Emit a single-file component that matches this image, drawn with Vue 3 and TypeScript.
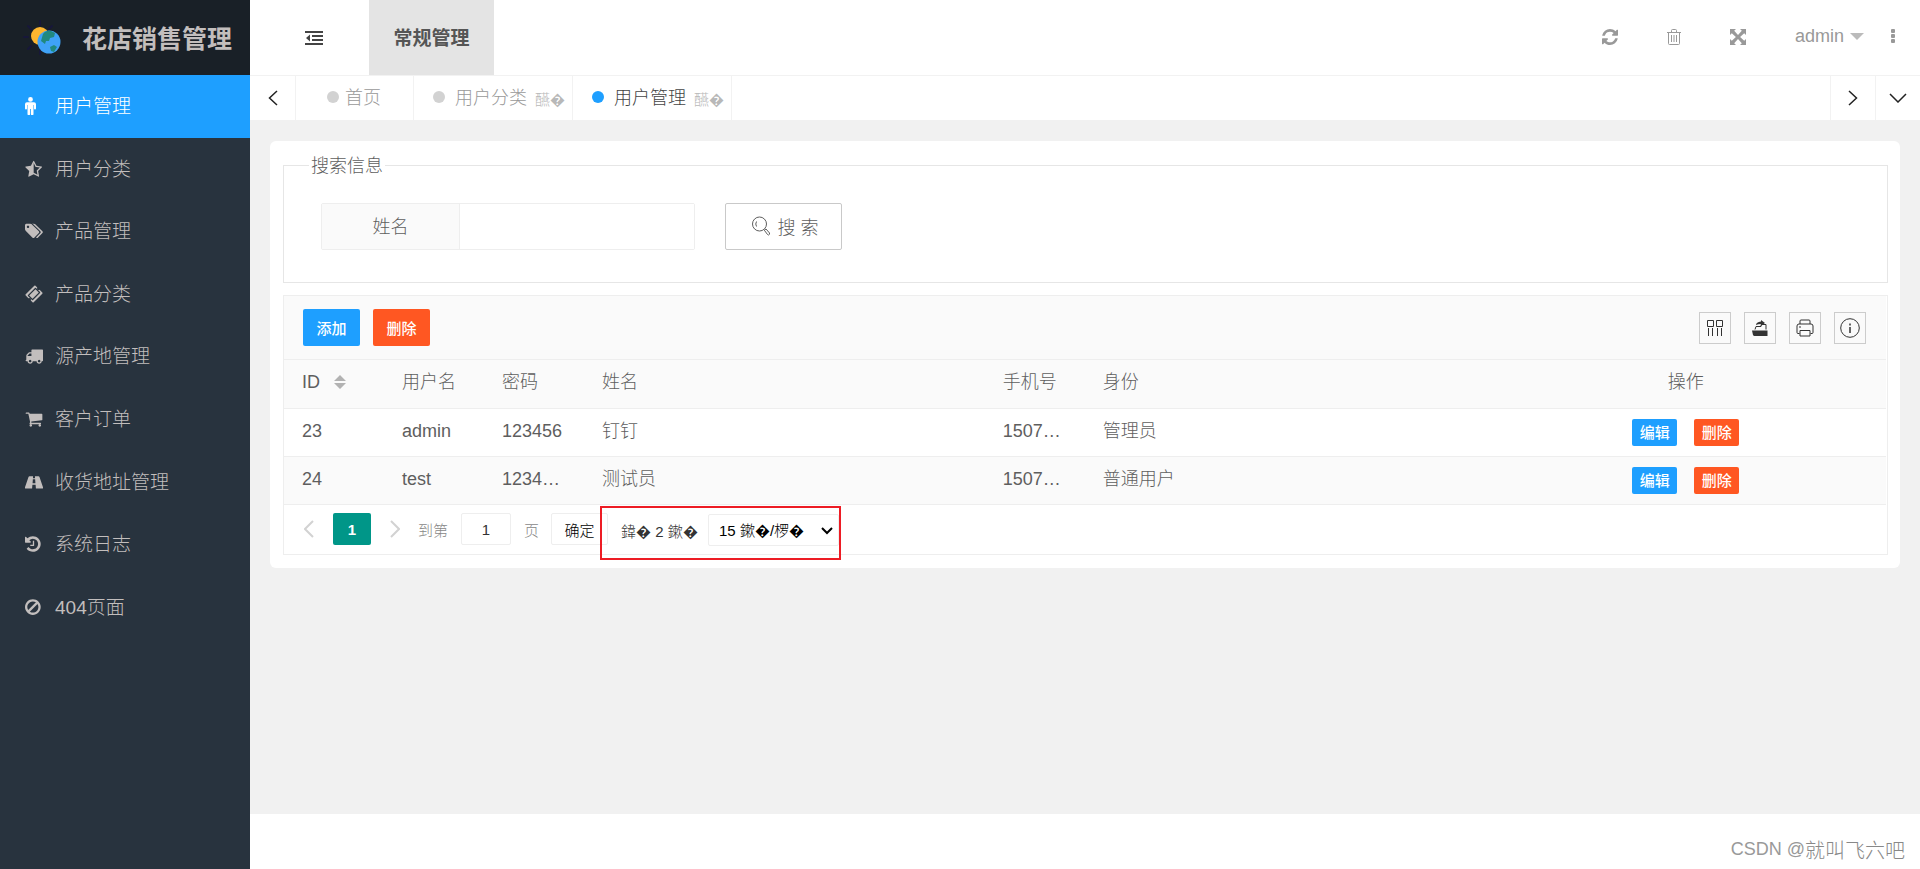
<script setup lang="ts">
import { ref } from 'vue'

interface MenuItem { label: string; icon: string; box: string; path: string }
interface User { id: number; name: string; password: string; realName: string; phone: string; role: string }
interface Tab { label: string; closable: boolean }

const menu: MenuItem[] = [
  { label: '用户管理', icon: 'male', box: '0 0 11 18', path: 'M5.5 0a2.4 2.4 0 1 1 0 4.8a2.4 2.4 0 0 1 0-4.8M2 5.3h7a2 2 0 0 1 2 2v4.2a1 1 0 0 1-2 0V8h-.5v9a1.2 1.2 0 0 1-2.6 0v-5h-.8v5a1.2 1.2 0 0 1-2.6 0V8H2v3.500a1 1 0 0 1-2 0V7.300a2 2 0 0 1 2-2' },
  { label: '用户分类', icon: 'star', box: '0 0 1728 1792', path: 'M1186 1001l257-250-356-52-66-10-30-60-159-322v963l59 31 318 168-60-355-12-66zm452-262l-363 354 86 500q5 33-6 51.500t-34 18.500q-17 0-40-12l-449-236-449 236q-23 12-40 12-23 0-34-18.500t-6-51.500l86-500-364-354q-32-32-23-59.500t54-34.500l502-73 225-455q20-41 49-41 28 0 49 41l225 455 502 73q45 7 54 34.500t-24 59.500z' },
  { label: '产品管理', icon: 'tags', box: '0 0 1920 1792', path: 'M448 448q0-53-37.500-90.500t-90.500-37.500-90.500 37.500-37.500 90.500 37.500 90.500 90.500 37.500 90.500-37.500 37.500-90.500zm1067 576q0 53-37 90l-491 492q-39 37-91 37-53 0-90-37l-715-716q-38-37-64.500-101t-26.500-117v-416q0-52 38-90t90-38h416q53 0 117 26.500t102 64.500l715 714q37 39 37 91zm384 0q0 53-37 90l-491 492q-39 37-91 37-36 0-59-14t-53-45l470-470q37-37 37-90 0-52-37-91l-715-714q-38-38-102-64.500t-117-26.500h224q53 0 117 26.500t102 64.500l715 714q37 39 37 91z' },
  { label: '产品分类', icon: 'ticket', box: '0 0 18 18', path: 'M10.500.700l1.700 1.700a1.800 1.800 0 0 0 2.400 2.400l2.700 2.700q.6.600 0 1.200l-8.600 8.600q-.6.600-1.200 0l-1.700-1.700a1.800 1.800 0 0 0-2.400-2.400L.7 10.500q-.6-.600 0-1.200L9.300.700q.6-.600 1.200 0M10 3L3 10q-.5.500 0 1l4 4q.5.500 1 0l7-7q.5-.5 0-1l-4-4q-.5-.5-1 0M10.500 4.200l3.300 3.300l-6.300 6.300L4.200 10.500z' },
  { label: '源产地管理', icon: 'truck', box: '0 0 1792 1792', path: 'M640 1408q0-52-38-90t-90-38-90 38-38 90 38 90 90 38 90-38 38-90zm-384-512h384v-256h-158q-13 0-22 9l-195 195q-9 9-9 22v30zm1280 512q0-52-38-90t-90-38-90 38-38 90 38 90 90 38 90-38 38-90zm256-1088v1024q0 15-4 26.500t-13.500 18.500-16.500 11.500-23.500 6-22.500 2-25.500 0-22.500-.5q0 106-75 181t-181 75-181-75-75-181h-384q0 106-75 181t-181 75-181-75-75-181h-64q-3 0-22.500.5t-25.500 0-22.500-2-23.500-6-16.500-11.500-13.500-18.500-4-26.500q0-26 19-45t45-19v-320q0-8-.5-35t0-38 2.500-34.500 6.500-37 14-30.500 22.500-30l198-198q19-19 50.500-32t58.500-13h160v-192q0-26 19-45t45-19h1024q26 0 45 19t19 45z' },
  { label: '客户订单', icon: 'cart', box: '0 0 1792 1792', path: 'M704 1536q0 52-38 90t-90 38-90-38-38-90 38-90 90-38 90 38 38 90zm896 0q0 52-38 90t-90 38-90-38-38-90 38-90 90-38 90 38 38 90zm128-1088v512q0 24-16.500 42.500t-40.500 21.500l-1044 122q13 60 13 70 0 16-24 64h920q26 0 45 19t19 45-19 45-45 19h-1024q-26 0-45-19t-19-45q0-11 8-31.500t16-36 21.500-40 15.500-29.500l-177-823h-204q-26 0-45-19t-19-45 19-45 45-19h256q16 0 28.500 6.500t19.500 15.500 13 24.500 8 26 5.500 29.500 4.500 26h1201q26 0 45 19t19 45z' },
  { label: '收货地址管理', icon: 'road', box: '0 0 19 18', path: 'M4.800 3h3.700l-.1 2h2.200l-.1-2h3.700q.8 0 1.100.8L19 14.500q.4 1.300-.8 1.300h-6.700L11.200 12H7.800l-.3 3.800H.8q-1.200 0-.8-1.300L3.700 3.800Q4 3 4.800 3M8.300 6.200L8 10.200h3l-.3-4z' },
  { label: '系统日志', icon: 'history', box: '128 64 1664 1664', path: 'M1664 896q0 156-61 298t-164 245-245 164-298 61q-172 0-327-72.500t-264-204.500q-7-10-6.500-22.500t8.500-20.500l137-138q10-9 25-9 16 2 23 12 73 95 179 147t225 52q104 0 198.500-40.500t163.500-109.500 109.500-163.500 40.500-198.500-40.500-198.500-109.500-163.500-163.500-109.500-198.500-40.500q-98 0-188 35.500t-160 101.500l137 138q31 30 14 69-17 40-59 40h-448q-26 0-45-19t-19-45v-448q0-42 40-59 39-17 69 14l130 129q107-101 244.500-156.500t284.500-55.500q156 0 298 61t245 164 164 245 61 298zm-640-288v448q0 14-9 23t-23 9h-320q-14 0-23-9t-9-23v-64q0-14 9-23t23-9h224v-352q0-14 9-23t23-9h64q14 0 23 9t9 23z' },
  { label: '404页面', icon: 'ban', box: '128 60 1664 1664', path: 'M1440 893q0-161-87-295l-754 753q137 89 297 89 111 0 211.500-43.500t173.500-116.500 116-174.500 43-212.500zm-999 299l755-754q-135-91-300-91-148 0-273 73t-198 199-73 274q0 162 89 299zm1223-299q0 157-61 300t-163.500 246-245 164-298.500 61-298.500-61-245-164-163.500-246-61-300 61-299.500 163.500-245.500 245-164 298.500-61 298.500 61 245 164 163.500 245.500 61 299.500z' },
]

const tabs: Tab[] = [
  { label: '首页', closable: false },
  { label: '用户分类', closable: true },
  { label: '用户管理', closable: true },
]

const users: User[] = [
  { id: 23, name: 'admin', password: '123456', realName: '钉钉', phone: '1507…', role: '管理员' },
  { id: 24, name: 'test', password: '1234…', realName: '测试员', phone: '1507…', role: '普通用户' },
]

const activeMenu = ref(0)
const activeTab = ref(2)
const keyword = ref('')
const page = ref('1')
</script>

<template>
  <div class="layout">
    <aside class="side">
      <h1 class="logo">
        <svg class="logo-icon" viewBox="0 0 38 38" aria-hidden="true">
          <g stroke="#17173a" stroke-width="2" stroke-linecap="round">
            <path d="M17 2v4M5 7l3 3M1 18h4M5 30l3-3M17 32v3M29 7l-3 3" />
          </g>
          <circle cx="17" cy="17" r="9" fill="#fdb62f" />
          <circle cx="26" cy="23" r="11.500" fill="#3fa2f7" />
          <path d="M20 15q3-4 8-3l4 2-1 4-4 1-1 3-3 0-1 3-4-3zM27 28l4-2 3 2-3 5-3-1z" fill="#21897f" />
        </svg>
        <span>花店销售管理</span>
      </h1>
      <nav>
        <ul class="menu">
          <li v-for="(item, i) in menu" :key="item.icon">
            <a href="#" class="menu-link" :class="{ active: i === activeMenu }" @click.prevent="activeMenu = i">
              <svg class="menu-icon" :class="item.icon" :viewBox="item.box" aria-hidden="true"><path :d="item.path" fill="currentColor" fill-rule="evenodd" /></svg>
              <span>{{ item.label }}</span>
            </a>
          </li>
        </ul>
      </nav>
    </aside>

    <div class="main">
      <header class="header">
        <button class="fold" aria-label="折叠菜单">
          <svg width="18" height="14" viewBox="0 0 18 14" fill="currentColor"><path d="M0 0h18v2H0zM7 4h11v2H7zM7 8h11v2H7zM0 12h18v2H0zM5 3.500v7L1 7z" /></svg>
        </button>
        <a href="#" class="module">常规管理</a>
        <div class="tools">
          <button class="tool refresh" aria-label="刷新">
            <svg width="16" height="16" viewBox="128 128 1536 1536"><path fill="currentColor" d="M1639 1056q0 5-1 7-64 268-268 434.500t-478 166.500q-146 0-282.500-55t-243.500-157l-129 129q-19 19-45 19t-45-19-19-45v-448q0-26 19-45t45-19h448q26 0 45 19t19 45-19 45l-137 137q71 66 161 102t187 36q134 0 250-65t186-179q11-17 53-117 8-23 30-23h192q13 0 22.500 9.500t9.500 22.500zm25-800v448q0 26-19 45t-45 19h-448q-26 0-45-19t-19-45 19-45l138-138q-148-137-349-137-134 0-250 65t-186 179q-11 17-53 117-8 23-30 23h-199q-13 0-22.500-9.500t-9.500-22.500v-7q65-268 270-434.500t480-166.500q146 0 284 55.500t245 156.500l130-129q19-19 45-19t45 19 19 45z" /></svg>
          </button>
          <button class="tool trash" aria-label="清理">
            <svg width="14" height="16" viewBox="0 0 14 16" fill="none" stroke="currentColor"><path d="M0 3.500h14M4.500 3V1.500q0-1 1-1h3q1 0 1 1V3M1.500 4v10.500q0 1 1 1h9q1 0 1-1V4M4.500 6v7M7 6v7M9.500 6v7" /></svg>
          </button>
          <button class="tool expand" aria-label="全屏">
            <svg width="16" height="16" viewBox="0 0 16 16"><path d="M0 0h6L4.200 1.800L8 5.900l3.800-4.100L10 0h6v6l-1.800-1.800L10.100 8l4.100 3.800L16 10v6h-6l1.800-1.800L8 10.100l-3.800 4.100L6 16H0v-6l1.800 1.800L5.900 8L1.800 4.200L0 6z" fill="currentColor" /></svg>
          </button>
          <button class="tool user">admin <i class="caret"></i></button>
          <button class="tool more" aria-label="更多">
            <svg width="4" height="15" viewBox="0 0 4 15" fill="currentColor"><rect width="4" height="4" rx="1" /><rect y="5" width="4" height="4" rx="1" /><rect y="10" width="4" height="4" rx="1" /></svg>
          </button>
        </div>
      </header>

      <div class="tabs">
        <button class="tab-nav left" aria-label="向左">
          <svg width="10" height="16" viewBox="0 0 10 16"><path d="M9 1L1.500 8L9 15" /></svg>
        </button>
        <div v-for="(tab, i) in tabs" :key="tab.label" class="tab" :class="{ home: !tab.closable, active: i === activeTab }">
          <button class="tab-label" @click="activeTab = i"><i class="dot"></i>{{ tab.label }}</button>
          <button v-if="tab.closable" class="tab-close">醼&#xFFFD;</button>
        </div>
        <button class="tab-nav right" aria-label="向右">
          <svg width="10" height="16" viewBox="0 0 10 16"><path d="M1 1l7.500 7L1 15" /></svg>
        </button>
        <button class="tab-nav down" aria-label="展开">
          <svg width="18" height="10" viewBox="0 0 18 10"><path d="M1 1l8 8l8-8" /></svg>
        </button>
      </div>

      <main class="body">
        <section class="card">
          <fieldset class="search">
            <legend>搜索信息</legend>
            <form class="search-form" @submit.prevent>
              <div class="field">
                <label for="realname">姓名</label>
                <input id="realname" v-model="keyword" type="text" />
              </div>
              <button class="search-btn" type="submit">
                <svg width="18" height="20" viewBox="0 0 18 20" fill="none" stroke="currentColor"><circle cx="7.500" cy="8" r="7" /><path d="M4.500 5.500q-1.500 2.500 0 5M12.300 14.200l1.700-1.200l3.500 4q.5 1.500-1 2q-.5 0-1-.5z" /></svg>
                <span>搜 索</span>
              </button>
            </form>
          </fieldset>

          <div class="grid">
            <div class="toolbar">
              <button class="btn blue">添加</button>
              <button class="btn red">删除</button>
              <div class="grid-tools">
                <button class="square" aria-label="筛选列"><svg viewBox="0 0 20 20" fill="none" stroke="currentColor"><path d="M2.500 2.500h6v6h-6zM11.500 2.500h6v6h-6zM3.500 10v8M7.500 10v8M12.500 10v8M16.500 10v8" /></svg></button>
                <button class="square" aria-label="导出"><svg viewBox="0 0 20 20"><path d="M5 11.500l1-3h5v-2h5v5" fill="none" stroke="currentColor" /><path d="M2 12.500h15.500v5.500h-13q-1 0-1.500-1zM6 7q0-3 5-3.500V2l4 3l-4 3V6q-3 0-5 1" fill="currentColor" /></svg></button>
                <button class="square" aria-label="打印"><svg viewBox="0 0 20 20" fill="none" stroke="currentColor"><path d="M5 6V3q0-1 1-1h8q1 0 1 1v3M4.500 15.500H3q-1 0-1-1V8q0-2 2-2h12q2 0 2 2v6.500q0 1-1 1h-1.500M5 12.500h10V18H5zM4 9h2" /></svg></button>
                <button class="square" aria-label="提示"><svg viewBox="0 0 20 20" fill="none" stroke="currentColor"><circle cx="10" cy="10" r="9.300" /><path d="M10 9v6M10 5.500v2" stroke-width="1.500" /></svg></button>
              </div>
            </div>

            <table>
              <colgroup>
                <col class="c-sm" /><col class="c-sm" /><col class="c-sm" /><col /><col class="c-sm" /><col /><col />
              </colgroup>
              <thead>
                <tr>
                  <th><span class="sortable">ID <svg width="12" height="16" viewBox="0 0 12 16"><path d="M0 7l6-6l6 6zM0 9h12l-6 6z" fill="#b2b2b2" /></svg></span></th>
                  <th>用户名</th><th>密码</th><th>姓名</th><th>手机号</th><th>身份</th><th class="center">操作</th>
                </tr>
              </thead>
              <tbody>
                <tr v-for="u in users" :key="u.id">
                  <td>{{ u.id }}</td><td>{{ u.name }}</td><td>{{ u.password }}</td><td>{{ u.realName }}</td>
                  <td>{{ u.phone }}</td><td>{{ u.role }}</td>
                  <td class="center"><div class="ops"><button class="btn small blue">编辑</button><button class="btn small red">删除</button></div></td>
                </tr>
              </tbody>
            </table>

            <div class="pager">
              <button class="arrow prev" aria-label="上一页"><svg width="10" height="18" viewBox="0 0 10 18"><path d="M9 1L1 9l8 8" /></svg></button>
              <button class="current">1</button>
              <button class="arrow next" aria-label="下一页"><svg width="10" height="18" viewBox="0 0 10 18"><path d="M1 1l8 8l-8 8" /></svg></button>
              <label class="goto">到第 <input v-model="page" type="text" /> 页</label>
              <button class="confirm">确定</button>
              <div class="mark">
                <span class="total">鍏&#xFFFD; 2 鏉&#xFFFD;</span>
                <span class="select-wrap">
                  <select aria-label="每页条数"><option>15 鏉&#xFFFD;/椤&#xFFFD;</option></select>
                  <svg width="12" height="8" viewBox="0 0 12 8"><path d="M1 1l5 5l5-5" fill="none" stroke="#000" stroke-width="2" /></svg>
                </span>
              </div>
            </div>
          </div>
        </section>
      </main>
      <footer class="footer"><span class="latin">CSDN @</span>就叫飞六吧</footer>
    </div>
  </div>
</template>

<style>
body { margin: 0; }
</style>

<style scoped>
.layout, .layout * { box-sizing: border-box; }
.layout {
  display: flex;
  min-height: 100vh;
  font-family: "Liberation Sans", "Noto Sans CJK SC", sans-serif;
  font-size: 18px;
  font-weight: 300;
  color: #5e5e5e;
}
button, input, select { font: inherit; color: inherit; margin: 0; }
button { padding: 0; border: 0; background: none; cursor: pointer; }
a { text-decoration: none; color: inherit; }
svg { display: block; flex: none; }

.side { flex: none; width: 250px; background: #28333e; color: #c2bebd; }
.logo {
  display: flex; align-items: center; gap: 21px; height: 75px; margin: 0; padding-left: 23px;
  background: #192027; font-size: 25px; font-weight: 700; white-space: nowrap;
}
.logo-icon { width: 38px; height: 38px; }
.logo span { padding-bottom: 2px; }
.menu { display: grid; grid-auto-rows: 1fr; height: 563px; margin: 0; padding: 0; list-style: none; }
.menu-link { display: flex; align-items: center; gap: 12px; height: 100%; padding-left: 25px; font-size: 19px; white-space: nowrap; }
.menu-link span { padding-bottom: 3px; }
.menu-link.active { background: #1e9fff; color: #fff; }
.menu-icon { width: 18px; height: 18px; }
.menu-icon.male { width: 11px; margin-right: 7px; }
.menu-icon.history, .menu-icon.ban { width: 17px; margin-right: 1px; }

.main { flex: 1; min-width: 0; display: flex; flex-direction: column; background: #fff; }
.header { display: flex; height: 75px; }
.fold { width: 119px; padding-left: 55px; color: #444; }
.module { display: flex; align-items: center; justify-content: center; width: 125px; padding-bottom: 3px; background: #e4e4e4; font-size: 19px; font-weight: 700; color: #555; }
.tools { display: flex; align-items: center; margin-left: auto; padding: 0 25px 2px 0; gap: 49px; color: #999; }
.user { display: flex; align-items: center; gap: 6px; }
.more { margin-left: -22px; }
.caret { border: 7px solid transparent; border-top-color: #bbb; border-bottom: 0; }

.tabs { display: flex; height: 45px; border-top: 1px solid #f2f2f2; }
.tab-nav { display: flex; align-items: center; justify-content: center; width: 45px; color: #222; }
.tab-nav path { fill: none; stroke: currentColor; stroke-width: 1.5; }
.tab-nav.left { width: 46px; border-right: 1px solid #f2f2f2; }
.tab-nav.right { margin-left: auto; border-left: 1px solid #f2f2f2; }
.tab-nav.down { border-left: 1px solid #f2f2f2; }
.tab { display: flex; align-items: center; width: 159px; padding: 0 7px 5px 19px; border-right: 1px solid #f2f2f2; color: #999; }
.tab.home { width: 118px; padding-left: 31px; }
.tab-label { display: flex; align-items: center; gap: 10px; white-space: nowrap; }
.tab.home .tab-label { gap: 6px; }
.tab-close { margin-left: auto; padding-top: 6px; font-size: 15px; color: #b8b8b8; white-space: nowrap; }
.dot { width: 12px; height: 12px; margin-top: 2px; border-radius: 50%; background: #d2d2d2; }
.tab.active { color: #444; }
.tab.active .dot { background: #1e9fff; }

.body { flex: 1; padding: 21px 20px; background: #f1f1f1; }
.card { padding: 11px 12px 13px 13px; border-radius: 6px; background: #fff; }
.search { margin: 0; padding: 25px 37px 32px; border: 1px solid #e6e6e6; }
.search legend { margin-left: -12px; padding: 2px 2px 0; line-height: 24px; }
.search-form { display: flex; gap: 30px; }
.field { display: flex; width: 374px; height: 47px; border: 1px solid #eee; border-radius: 2px; }
.field label { display: flex; align-items: center; justify-content: center; width: 138px; padding-bottom: 4px; border-right: 1px solid #eee; background: #fafafa; }
.field input { flex: 1; min-width: 0; padding: 0 12px; border: 0; outline: none; background: #fff; }
.search-btn { display: flex; align-items: center; justify-content: center; gap: 7px; width: 117px; height: 47px; padding: 0 0 2px 4px; border: 1px solid #c9c9c9; border-radius: 2px; }

.grid { margin-top: 12px; padding-right: 1px; border: 1px solid #eee; }
.toolbar { display: flex; align-items: center; gap: 13px; height: 64px; padding: 0 20px 0 19px; border-bottom: 1px solid #eee; background: #fafafa; }
.btn { width: 57px; height: 37px; border-radius: 2px; font-size: 15px; font-weight: 500; color: #fff; }
.btn.small { width: 45px; height: 27px; line-height: 27px; }
.blue { background: #1e9fff; }
.red { background: #ff5722; }
.grid-tools { display: flex; gap: 13px; margin-left: auto; color: #333; }
.square { display: grid; place-items: center; width: 32px; height: 32px; border: 1px solid #ccc; }
.square svg { width: 20px; height: 20px; }

table { width: 100%; table-layout: fixed; border-collapse: collapse; }
.c-sm { width: 100px; }
th, td { height: 48px; padding: 0 18px 3px; border-bottom: 1px solid #eee; font-weight: 300; line-height: 24px; text-align: left; white-space: nowrap; }
th, tbody tr:nth-child(even) { background: #fafafa; }
.center { text-align: center; }
.sortable { display: flex; align-items: center; gap: 14px; }
.ops { display: flex; justify-content: center; gap: 17px; padding-top: 4px; }

.pager { display: flex; align-items: center; height: 49px; padding: 0 0 0 20px; font-size: 15px; }
.arrow path { fill: none; stroke: #d2d2d2; stroke-width: 2; }
.current { width: 38px; height: 32px; margin: 0 19px; border-radius: 2px; background: #009688; color: #fff; font-weight: 700; }
.goto { display: flex; align-items: center; gap: 13px; margin-left: 18px; color: #888; }
.goto input { width: 50px; height: 32px; border: 1px solid #eee; border-radius: 2px; text-align: center; color: #333; outline: none; }
.confirm { width: 57px; height: 32px; margin-left: 12px; border: 1px solid #eee; border-radius: 2px; color: #000; }
.mark { display: flex; align-items: center; flex: none; width: 241px; height: 54px; margin: 4px 0 -4px -8px; padding: 0 0 6px 19px; border: 2px solid #ed1c24; z-index: 1; }
.total { flex: 1; white-space: nowrap; color: #333; }
.select-wrap { position: relative; width: 131px; }
.select-wrap select { width: 100%; height: 32px; padding: 0 10px; border: 1px solid #eee; border-radius: 2px; background: #fff; color: #000; appearance: none; outline: none; }
.select-wrap svg { position: absolute; right: 6px; top: 13px; pointer-events: none; }

.footer { display: flex; align-items: center; justify-content: flex-end; height: 55px; padding: 16px 15px 0 0; font-size: 20px; color: #888; white-space: pre; }
.latin { font-size: 18px; color: #999; }
</style>
